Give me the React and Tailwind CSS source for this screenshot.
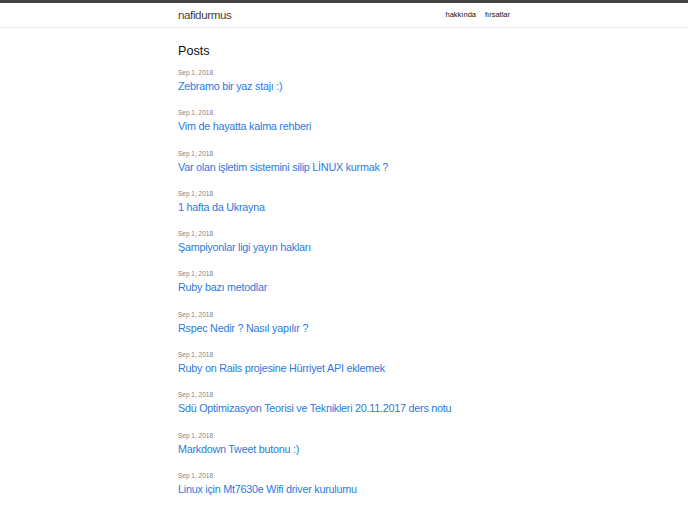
import React from 'react';

// Post list shown on the home page
const posts = [
  'Zebramo bir yaz stajı :)',
  'Vim de hayatta kalma rehberi',
  'Var olan işletim sistemini silip LİNUX kurmak ?',
  '1 hafta da Ukrayna',
  'Şampiyonlar ligi yayın hakları',
  'Ruby bazı metodlar',
  'Rspec Nedir ? Nasıl yapılır ?',
  'Ruby on Rails projesine Hürriyet API eklemek',
  'Sdü Optimizasyon Teorisi ve Teknikleri 20.11.2017 ders notu',
  'Markdown Tweet butonu :)',
  'Linux için Mt7630e Wifi driver kurulumu',
];

const App = () => {
  return (
    <div className="min-h-[512px] bg-white text-[#111] font-['Liberation_Sans',Arial,sans-serif]">
      {/* Site header */}
      <header className="border-t-[3px] border-[#424242] border-b border-b-[#e8e8e8] h-[28px]">
        <div className="w-[332px] mx-auto flex justify-between items-center h-full">
          <a className="text-[11.6px] tracking-[-0.4px] text-[#424242]">nafidurmus</a>
          <nav className="flex gap-[9px] text-[7.5px] text-[#111]">
            <a>hakkında</a>
            <a>fırsatlar</a>
          </nav>
        </div>
      </header>

      {/* Posts */}
      <main className="w-[332px] mx-auto pt-[13px]">
        <h1 className="text-[12.6px] leading-[20px] mb-[7px]">Posts</h1>
        <ul>
          {posts.map((title) => (
            <li key={title} className="h-[40.3px]">
              <div className="text-[6.5px] leading-[10px] text-[#828282]">Sep 1, 2018</div>
              <a className="block text-[10.8px] tracking-[-0.25px] leading-[16px] text-[#2a7ae2]">{title}</a>
            </li>
          ))}
        </ul>
      </main>
    </div>
  );
};

export default App;
